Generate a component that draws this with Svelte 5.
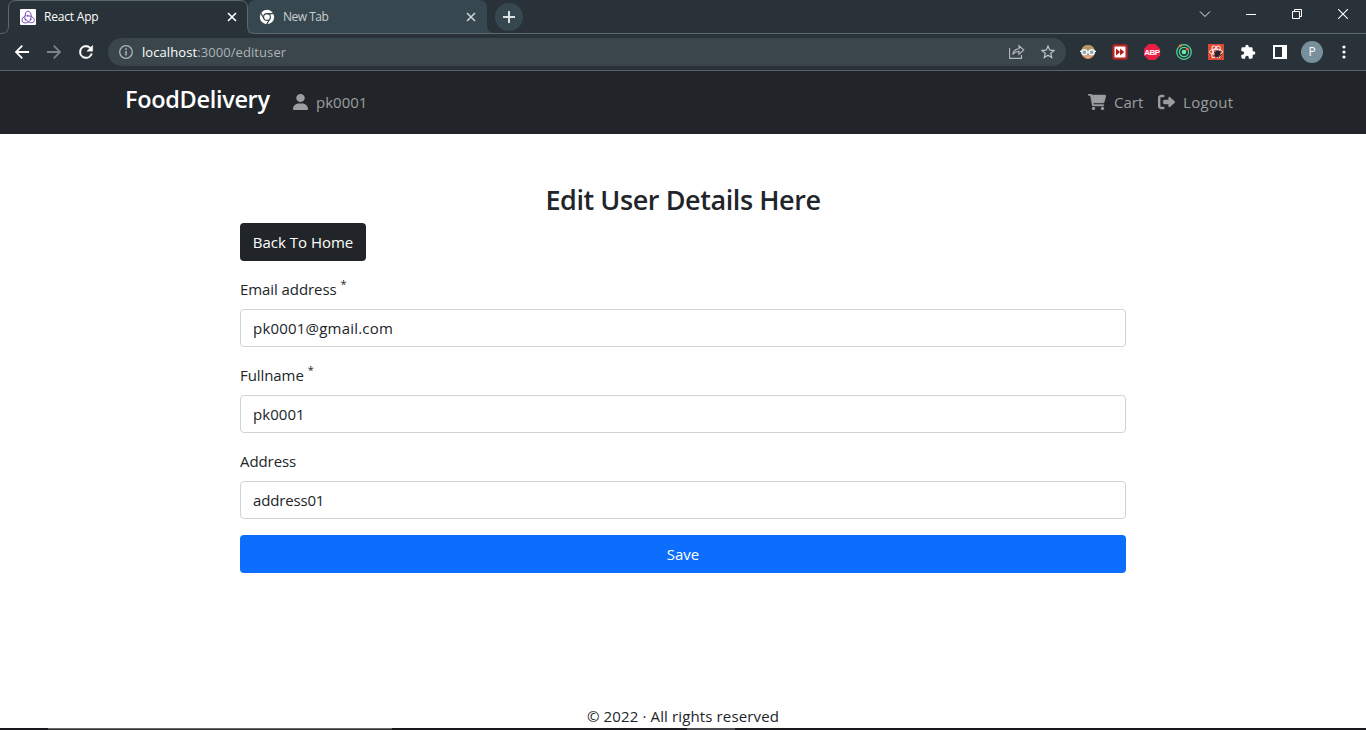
<script>
  const fields = [
    { id: 'email', label: 'Email address', required: true, value: 'pk0001@gmail.com', ls: 0.2 },
    { id: 'fullname', label: 'Fullname', required: true, value: 'pk0001', ls: 0.05 },
    { id: 'address', label: 'Address', required: false, value: 'address01', ls: -0.16 }
  ];
</script>

<div class="screen">
  <header class="tabstrip">
    <svg class="outline" width="1366" height="34" viewBox="0 0 1366 34" fill="none">
      <path d="M248 33V8Q248 0 256 0H479Q487 0 487 8V25Q487 33 495 33Z" fill="#37474f" />
      <path d="M247.5 26Q248 33.500 256 33.500H248Z" fill="#37474f" />
      <path d="M0 33.500H1Q8.500 33.500 8.500 26V8Q8.500 .500 16 .500H240Q247.500 .500 247.500 8V26Q247.500 33.500 255 33.500H1366" stroke="#5b686e" />
    </svg>
    <div class="tab active">
      <svg width="16" height="16" viewBox="0 0 16 16" fill="none">
        <rect width="16" height="16" rx="1" fill="#fff" />
        <g stroke="#764abc" stroke-width="1">
          <path d="M10.600 10C12 6.500 10.700 2.200 8.100 2.200C5.600 2.200 4.600 5 5.800 7.600" />
          <path d="M5.500 6.500C2 8.200 1 12.100 3.200 13.400C5.500 14.600 9.500 13.300 10.800 10.500" />
          <path d="M6.200 10.900C8.400 13.500 12.200 14.700 14 12.600C15.600 9.900 11.600 6.400 7.500 7" />
          <path d="M5.400 6.500C4 7.800 4.600 10 6 10.900" />
        </g>
        <g fill="#764abc"><circle cx="10.600" cy="10.300" r=".9" /><circle cx="5.600" cy="10.700" r=".9" /><circle cx="7.500" cy="6.700" r=".9" /></g>
      </svg>
      <span class="title t1">React App</span>
      <svg class="x" width="10" height="10" viewBox="0 0 10 10" stroke="#fff" stroke-width="1.600"><path d="M1 1L9 9M9 1L1 9" /></svg>
    </div>
    <div class="tab idle">
      <svg width="16" height="16" viewBox="0 0 16 16">
        <circle cx="8" cy="8" r="7.200" fill="#fff" />
        <g stroke="#37474f" stroke-width="1.100" fill="none"><circle cx="8" cy="8" r="3.400" /><path d="M8 4.600H14.800M5.050 9.700L1.700 3.900M10.950 9.700L7.500 15.600" /></g>
      </svg>
      <span class="title t2">New Tab</span>
      <svg class="x" width="10" height="10" viewBox="0 0 10 10" stroke="#d3d8da" stroke-width="1.500"><path d="M1 1L9 9M9 1L1 9" /></svg>
    </div>
    <div class="plus">
      <svg width="12" height="12" viewBox="0 0 12 12" stroke="#dfe2e4" stroke-width="2"><path d="M6 0V12M0 6H12" /></svg>
    </div>
    <div class="window">
      <span><svg width="12" height="12" viewBox="0 0 12 12" fill="none" stroke="#eceeef"><path d="M1 3.500L6 8.500L11 3.500" /></svg></span>
      <span><svg width="10" height="10" viewBox="0 0 10 10"><rect y="5" width="10" height="1" fill="#fff" /></svg></span>
      <span><svg width="10" height="10" viewBox="0 0 10 10" fill="none" stroke="#fff"><path d="M.5 2.500H7.500V9.500H.5ZM2.500 2.500V.5H9.500V7.500H7.500" /></svg></span>
      <span><svg width="10" height="10" viewBox="0 0 10 10" stroke="#fff" stroke-width="1.100"><path d="M0 0L10 10M10 0L0 10" /></svg></span>
    </div>
  </header>

  <div class="toolbar">
    <span class="cell"><svg width="20" height="20" viewBox="0 0 24 24" fill="#fff"><path d="M20.500 10.900H7.400l5.700-5.700L11.600 3.700 3.300 12l8.300 8.300 1.500-1.500-5.700-5.700h13.100z" /></svg></span>
    <span class="cell"><svg width="20" height="20" viewBox="0 0 24 24" fill="#7b8488"><path d="M3.500 10.900h13.100l-5.700-5.700 1.500-1.500 8.300 8.300-8.300 8.300-1.500-1.500 5.700-5.700H3.500z" /></svg></span>
    <span class="cell"><svg width="20" height="20" viewBox="0 0 24 24" fill="#fff"><path d="M17.650 6.350A7.960 7.960 0 0 0 12 4a8 8 0 1 0 7.730 10h-2.080A6 6 0 1 1 12 6c1.660 0 3.140.690 4.220 1.780L13 11h7V4z" stroke="#fff" stroke-width=".500" /></svg></span>
    <div class="omnibox">
      <svg class="info" width="16" height="16" viewBox="0 0 16 16" fill="none" stroke="#aeb5b8" stroke-width="1.300"><circle cx="8" cy="8" r="6.300" /><path d="M8 7V11.500M8 4.300V5.900" stroke-width="1.500" /></svg>
      <span class="url"><b>localhost</b>:3000/edituser</span>
      <svg class="share" width="16" height="16" viewBox="0 0 16 16" fill="none" stroke="#b4babd" stroke-width="1.100"><path d="M.6 4V14.400H12.500V11" /><path d="M3.700 10.500C4.300 7 6.600 5 10 4.700V1.800L14.800 6L10 10.200V7.400C7.300 7.400 5.300 8.500 3.700 10.500Z" /></svg>
      <svg class="star" width="18" height="18" viewBox="0 0 24 24" fill="#bfc5c8"><path d="M22 9.240l-7.190-.620L12 2 9.190 8.630 2 9.240l5.460 4.730L5.820 21 12 17.270 18.180 21l-1.630-7.030zM12 15.400l-3.760 2.270 1-4.280-3.320-2.880 4.380-.380L12 6.100l1.710 4.040 4.380.380-3.320 2.880 1 4.280z" /></svg>
    </div>
    <span class="cell"><svg width="16" height="16" viewBox="0 0 16 16">
      <ellipse cx="8" cy="8" rx="6.700" ry="7" fill="#c98f6b" /><path d="M1.300 6.500C1.800 3 4.500 1 8 1S14.200 3 14.700 6.500Z" fill="#b3966a" />
      <path d="M5 12Q8 10.500 11 12Q10.500 14.500 8 14.500T5 12Z" fill="#e9a27e" />
      <g fill="#8eb8c5" stroke="#f4fafb" stroke-width="1.300"><circle cx="4.300" cy="8.300" r="2.600" /><circle cx="11.700" cy="8.300" r="2.600" /></g><path d="M0 7.300H2M14 7.300H16M6.800 7.800H9.200" stroke="#fff" stroke-width="1.200" /><path d="M4.300 7.500V9M11.700 7.500V9" stroke="#6b98a6" />
    </svg></span>
    <span class="cell"><svg width="16" height="16" viewBox="0 0 16 16"><rect x=".3" y=".3" width="15.400" height="15.400" rx="2.500" fill="#b92522" /><rect x="2.500" y="2.500" width="11" height="11" rx="1" fill="#fff" /><path d="M4 4.500L8.100 8L4 11.500ZM8.100 4.500L12.200 8L8.100 11.500Z" fill="#ae1917" /></svg></span>
    <span class="cell"><svg class="abp" width="16" height="16" viewBox="0 0 16 16"><path d="M4.700 0H11.300L16 4.700V11.300L11.300 16H4.700L0 11.300V4.700Z" fill="#ed1e45" /><text x="8" y="10.900" text-anchor="middle" font-size="8" font-weight="700" letter-spacing="-.5" fill="#fff">ABP</text></svg></span>
    <span class="cell"><svg width="16" height="16" viewBox="0 0 16 16" fill="none" stroke="#4fdca0" stroke-width="1.200"><circle cx="8" cy="8" r="7.300" /><circle cx="8" cy="8" r="4.600" /><circle cx="8" cy="8" r="2.300" fill="#66efac" stroke="none" /><circle cx="4.300" cy="1.900" r="1.400" fill="#f27432" stroke="none" /><circle cx="11.200" cy="4.900" r="1.500" fill="#ed6434" stroke="none" /></svg></span>
    <span class="cell"><svg width="16" height="16" viewBox="0 0 16 16" fill="none"><rect width="16" height="16" fill="#db4a36" /><g stroke="#fff" stroke-width=".9"><ellipse cx="8" cy="7.800" rx="6.600" ry="2.600" /><ellipse cx="8" cy="7.800" rx="6.600" ry="2.600" transform="rotate(60 8 7.800)" /><ellipse cx="8" cy="7.800" rx="6.600" ry="2.600" transform="rotate(-60 8 7.800)" /></g><ellipse cx="9.500" cy="9.800" rx="2.500" ry="3.700" transform="rotate(38 9.500 9.800)" fill="#282329" /><path d="M6 8L13 12M8 13L12.500 7M7 10L9 7M10 14L13.500 10" stroke="#282329" stroke-width=".7" /></svg></span>
    <span class="cell"><svg class="puzzle" width="16" height="16" viewBox="0 0 24 24" fill="#fff"><path d="M20.500 11H19V7a2 2 0 0 0-2-2h-4V3.500a2.500 2.500 0 0 0-5 0V5H4a2 2 0 0 0-1.990 2v3.800H3.500a2.700 2.700 0 0 1 0 5.400H2V20a2 2 0 0 0 2 2h3.800v-1.500a2.700 2.700 0 0 1 5.400 0V22H17a2 2 0 0 0 2-2v-4h1.500a2.500 2.500 0 0 0 0-5z" /></svg></span>
    <span class="cell"><svg width="14" height="14" viewBox="0 0 14 14"><path d="M0 0H14V14H0ZM2 2V12H9V2Z" fill="#fff" fill-rule="evenodd" /></svg></span>
    <span class="cell"><i class="avatar">P</i></span>
    <span class="cell"><svg class="dots" width="4" height="14" viewBox="0 0 4 14" fill="#fff"><circle cx="2" cy="2" r="1.600" /><circle cx="2" cy="7" r="1.600" /><circle cx="2" cy="12" r="1.600" /></svg></span>
  </div>

  <nav>
    <span class="brand">FoodDelivery</span>
    <span class="link user"><svg width="15" height="16" viewBox="0 0 448 512" preserveAspectRatio="none"><path d="M224 256c70.700 0 128-57.310 128-128s-57.300-128-128-128C153.300 0 96 57.310 96 128S153.300 256 224 256zM274.700 304H173.300C77.610 304 0 381.600 0 477.300c0 19.140 15.520 34.670 34.660 34.670h378.700C432.500 512 448 496.500 448 477.300C448 381.600 370.400 304 274.700 304z" /></svg><span class="pk">pk0001</span></span>
    <span class="link cart"><svg width="18" height="16" viewBox="0 0 576 512"><path d="M96 0C107.500 0 117.400 8.190 119.600 19.510L121.100 32H541.800C562.100 32 578.300 52.250 572.600 72.660L518.600 264.700C514.700 278.500 502.100 288 487.800 288H170.700L179.900 336H488C501.300 336 512 346.700 512 360C512 373.300 501.300 384 488 384H159.100C148.500 384 138.600 375.800 136.400 364.500L76.140 48H24C10.750 48 0 37.250 0 24C0 10.750 10.750 0 24 0H96zM128 464C128 437.500 149.500 416 176 416C202.500 416 224 437.500 224 464C224 490.500 202.500 512 176 512C149.500 512 128 490.500 128 464zM512 464C512 490.500 490.500 512 464 512C437.500 512 416 490.500 416 464C416 437.500 437.500 416 464 416C490.500 416 512 437.500 512 464z" stroke="#9b9d9e" stroke-width="14" /></svg><span class="ct">Cart</span></span>
    <span class="link out"><svg width="17" height="16" viewBox="0 0 512 512" preserveAspectRatio="none"><path d="M96 480h64C177.700 480 192 465.700 192 448S177.700 416 160 416H96c-17.670 0-32-14.330-32-32V128c0-17.670 14.330-32 32-32h64C177.700 96 192 81.670 192 64S177.700 32 160 32H96C42.980 32 0 74.980 0 128v256C0 437 42.980 480 96 480zM504.800 238.500l-144.100-136c-6.975-6.578-17.200-8.375-26-4.594c-8.803 3.797-14.510 12.470-14.510 22.050l-.0918 72l-128-.001c-17.690 0-32.020 14.330-32.020 32v64c0 17.670 14.340 32 32.020 32l128 .001l.0918 71.100c0 9.578 5.707 18.250 14.510 22.050c8.803 3.781 19.030 1.984 26-4.594l144.100-136C514.400 264.400 514.400 247.600 504.800 238.500z" stroke="#9b9d9e" stroke-width="14" /></svg><span class="lo">Logout</span></span>
  </nav>

  <main>
    <h1>Edit User Details Here</h1>
    <button class="back"><span>Back To Home</span></button>
    {#each fields as f}
      <label for={f.id}>{f.label}{#if f.required}<sup>*</sup>{/if}</label>
      <input id={f.id} value={f.value} style="letter-spacing: {f.ls}px" />
    {/each}
    <button class="save">Save</button>
  </main>

  <footer>© 2022 · All rights reserved</footer>
  <div class="taskbar"><i class="search"></i><i class="app"></i></div>
</div>

<style>
  :global(body) { background: #fff; overflow: hidden; }
  .screen { width: 1366px; height: 730px; overflow: hidden; display: flex; flex-direction: column; font-family: "Open Sans", "Noto Sans", sans-serif; color: #212529; }
  .screen * { box-sizing: border-box; }
  svg { display: block; flex: none; }
  .tabstrip { position: relative; height: 34px; flex: none; display: flex; background: #283238; padding-left: 8px; }
  .outline { position: absolute; left: 0; top: 0; }
  .tab { position: relative; width: 240px; height: 33px; display: flex; align-items: center; padding: 0 11px 0 12px; font-size: 12px; color: #fff; }
  .tab.idle { width: 239px; padding-left: 11px; color: #c9ced1; }
  .title { margin-left: 8px; white-space: nowrap; flex: 1; }
  .t1 { letter-spacing: -0.2px; }
  .t2 { letter-spacing: -0.5px; }
  .plus { position: relative; margin: 3px 0 0 8px; width: 28px; height: 28px; border-radius: 50%; background: #37474f; display: grid; place-items: center; }
  .window { position: relative; margin-left: auto; height: 28px; display: flex; }
  .window span { width: 46px; display: grid; place-items: center; }
  .toolbar { height: 37px; flex: none; background: #283238; display: flex; align-items: center; padding: 0 6px; border-bottom: 1px solid #556268; }
  .cell { width: 32px; height: 32px; flex: none; display: grid; place-items: center; }
  .abp { overflow: visible; font-family: "Liberation Sans", Arial, sans-serif; }
  .omnibox { width: 958px; height: 28px; margin: 0 6px; border-radius: 14px; background: #3a464b; display: flex; align-items: center; padding: 0 9px 0 10px; }
  .url { margin-left: 8px; flex: 1; font-size: 13px; letter-spacing: 0.08px; color: #adb4b7; }
  .url b { font-weight: 400; color: #fff; }
  .share { margin-right: 14px; }
  .avatar { width: 22px; height: 22px; border-radius: 50%; background: #78909c; color: #fff; font: 12px/22px "Open Sans", sans-serif; text-align: center; }
  nav { height: 63px; flex: none; background: #212529; display: flex; align-items: center; padding: 0 133px 0 125px; }
  .brand { width: 145px; font-size: 23.5px; letter-spacing: -0.32px; font-weight: 650; color: #fff; line-height: 30px; margin-top: -7px; white-space: nowrap; }
  .link { display: flex; align-items: center; gap: 8px; font-size: 15px; color: #9b9d9e; margin-top: -1px; white-space: nowrap; }
  .link svg { fill: #9b9d9e; }
  .user { margin-left: 23px; }
  .pk { letter-spacing: 0; }
  .cart { margin-left: auto; }
  .ct { width: 29px; }
  .out { margin-left: 15px; }
  .lo { width: 50px; letter-spacing: 0.3px; }
  main { width: 886px; margin: 48px auto 0; display: flex; flex-direction: column; font-size: 15px; }
  h1 { margin: 0 0 7px; padding-top: 1px; font-size: 27px; letter-spacing: -0.42px; line-height: 34px; height: 34px; font-weight: 600; text-align: center; white-space: nowrap; }
  button { height: 38px; border: 0; border-radius: 4px; padding: 0; font: inherit; color: #fff; }
  .back { width: 126px; background: #212529; margin-bottom: 16px; }
  label { height: 24px; line-height: 24px; margin-bottom: 8px; letter-spacing: -0.08px; }
  sup { font-size: 11px; line-height: 0; margin-left: 4px; vertical-align: baseline; position: relative; top: -7px; }
  input { height: 38px; border: 1px solid #ced4da; border-radius: 4px; padding: 0 12px; font: inherit; color: #212529; background: #fff; margin: 0 0 16px; outline: none; }
  .save { background: #0d6efd; }
  footer { margin-top: auto; text-align: center; font-size: 15px; letter-spacing: 0.13px; line-height: 24px; height: 24px; }
  .taskbar { height: 2px; flex: none; background: #19191b; display: flex; }
  .search { width: 344px; margin-left: 48px; background: #333; border-top: 1px solid #666; }
  .app { width: 48px; margin-left: 295px; background: #4b4b4d; }
</style>
